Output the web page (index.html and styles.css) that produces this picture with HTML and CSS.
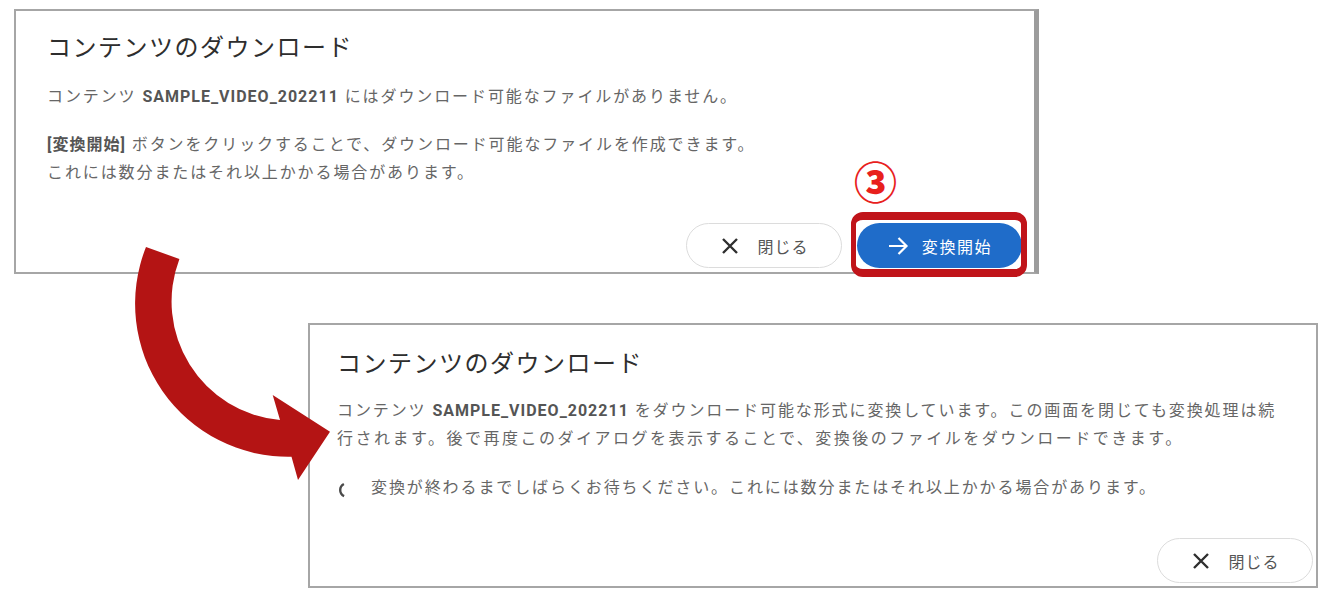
FILE: index.html
```html
<!DOCTYPE html>
<html lang="ja">
<head>
<meta charset="utf-8">
<title>コンテンツのダウンロード</title>
<link rel="stylesheet" href="styles.css">
</head>
<body>
<div class="canvas">
  <section class="dialog dialog-first">
    <h2 class="dialog-title">コンテンツのダウンロード</h2>
    <p class="dialog-text">コンテンツ <b>SAMPLE_VIDEO_202211</b> にはダウンロード可能なファイルがありません。</p>
    <p class="dialog-text"><b>[変換開始]</b> ボタンをクリックすることで、ダウンロード可能なファイルを作成できます。<br>これには数分またはそれ以上かかる場合があります。</p>
    <div class="dialog-actions">
      <button class="btn btn-outline" type="button">
        <svg class="icon-close" viewBox="0 0 18 18" width="18" height="18"><path d="M2 2L16 16M16 2L2 16" stroke="#2f2f2f" stroke-width="2.4" fill="none"/></svg>
        <span>閉じる</span>
      </button>
      <div class="highlight">
        <span class="step-badge">③</span>
        <button class="btn btn-primary" type="button">
          <svg class="icon-arrow" viewBox="0 0 22 22" width="22" height="22"><path d="M2 11H19.5M11.5 3L19.5 11L11.5 19" stroke="#ffffff" stroke-width="2.2" fill="none"/></svg>
          <span>変換開始</span>
        </button>
      </div>
    </div>
  </section>

  <section class="dialog dialog-second">
    <h2 class="dialog-title">コンテンツのダウンロード</h2>
    <p class="dialog-text wide">コンテンツ <b>SAMPLE_VIDEO_202211</b> をダウンロード可能な形式に変換しています。この画面を閉じても変換処理は続行されます。後で再度このダイアログを表示することで、変換後のファイルをダウンロードできます。</p>
    <p class="dialog-text status">
      <svg class="spinner" viewBox="0 0 16 16" width="16" height="16"><circle cx="8" cy="8" r="6.8" fill="none" stroke="#4a4a4a" stroke-width="2.4" stroke-dasharray="15 40" stroke-dashoffset="-13.6"/></svg>
      <span>変換が終わるまでしばらくお待ちください。これには数分またはそれ以上かかる場合があります。</span>
    </p>
    <div class="dialog-actions">
      <button class="btn btn-outline" type="button">
        <svg class="icon-close" viewBox="0 0 18 18" width="18" height="18"><path d="M2 2L16 16M16 2L2 16" stroke="#2f2f2f" stroke-width="2.4" fill="none"/></svg>
        <span>閉じる</span>
      </button>
    </div>
  </section>

  <svg class="flow-arrow" viewBox="0 0 1326 598" width="1326" height="598">
    <path d="M146 247 A153 153 0 0 0 291.5 456.7 L298 480 L330 431.7 L272.7 395 L280 420 A119 119 0 0 1 179.4 259 Z" fill="#b41414"/>
  </svg>
</div>
</body>
</html>
```

FILE: styles.css
```css
* {
  box-sizing: border-box;
}

html, body {
  margin: 0;
  padding: 0;
  background: #ffffff;
}

body {
  font-family: "Roboto", "Noto Sans CJK JP", sans-serif;
  color: #666666;
}

.canvas {
  position: relative;
  width: 1326px;
  height: 598px;
  overflow: hidden;
  padding-top: 9px;
  display: flex;
  flex-direction: column;
}

.dialog {
  display: flex;
  flex-direction: column;
  height: 265px;
  background: #ffffff;
  border: 2px solid #a6a6a6;
}

.dialog-first {
  margin-left: 14px;
  width: 1025px;
  padding: 21px 12px 4px 31px;
  border-right: 5px solid #9c9c9c;
}

.dialog-second {
  margin-left: 308px;
  margin-top: 49px;
  width: 1010px;
  padding: 23px 3px 3px 27px;
}

.dialog-title {
  margin: 0;
  font-size: 24px;
  line-height: 32px;
  font-weight: 400;
  letter-spacing: 1.5px;
  color: #2e2e2e;
}

.dialog-text {
  margin: 19px 0 0;
  font-size: 16px;
  line-height: 28px;
  letter-spacing: 1.9px;
  color: #666666;
}

.dialog-first .dialog-text + .dialog-text {
  margin-top: 20px;
}

.dialog-second .dialog-text {
  margin-top: 17px;
}

.dialog-second .dialog-text.status {
  margin-top: 21px;
}

.dialog-text b {
  font-weight: 700;
  color: #555555;
  letter-spacing: 1px;
}

.wide {
  max-width: 951px;
  letter-spacing: 2.5px;
}

.wide::first-line {
  letter-spacing: 1.9px;
}

.status {
  display: flex;
  align-items: center;
  gap: 16px;
  padding-left: 2px;
}

.spinner {
  flex: none;
  margin-top: 3px;
}

.dialog-actions {
  margin-top: auto;
  display: flex;
  justify-content: flex-end;
  align-items: center;
  gap: 15px;
}

.btn {
  display: flex;
  align-items: center;
  justify-content: center;
  height: 45px;
  border-radius: 23px;
  font-family: "Roboto", "Noto Sans CJK JP", sans-serif;
  font-size: 16px;
  letter-spacing: 1px;
  cursor: pointer;
  padding: 0;
}

.btn-outline {
  width: 156px;
  gap: 18px;
  background: #ffffff;
  border: 1px solid #dcdcdc;
  color: #555555;
  padding-left: 2px;
}

.btn-primary {
  width: 165px;
  gap: 13px;
  background: #1f6cc9;
  border: none;
  color: #ffffff;
  letter-spacing: 1.6px;
}

.highlight {
  position: relative;
}

.highlight::after {
  content: "";
  position: absolute;
  left: -6px;
  top: -11px;
  right: -5px;
  bottom: -9px;
  border: solid #c0141a;
  border-width: 8px 6px 8px 5px;
  border-radius: 12px;
  pointer-events: none;
}

.step-badge {
  position: absolute;
  left: -3px;
  top: -64px;
  font-family: "Noto Sans CJK JP", sans-serif;
  font-size: 43px;
  line-height: 43px;
  font-weight: 900;
  color: #e8201c;
}

.flow-arrow {
  position: absolute;
  left: 0;
  top: 0;
  pointer-events: none;
}
```
